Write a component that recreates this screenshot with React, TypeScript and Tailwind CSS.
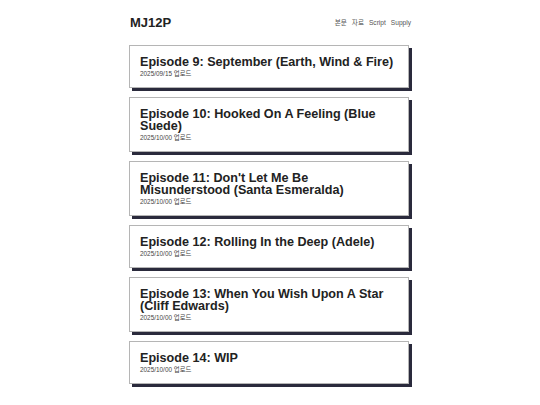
const episodes = [
  { title: "Episode 9: September (Earth, Wind & Fire)", date: "2025/09/15" },
  { title: "Episode 10: Hooked On A Feeling (Blue Suede)", date: "2025/10/00" },
  { title: "Episode 11: Don't Let Me Be Misunderstood (Santa Esmeralda)", date: "2025/10/00" },
  { title: "Episode 12: Rolling In the Deep (Adele)", date: "2025/10/00" },
  { title: "Episode 13: When You Wish Upon A Star (Cliff Edwards)", date: "2025/10/00" },
  { title: "Episode 14: WIP", date: "2025/10/00" },
];

export default function App() {
  return (
    <div className="min-h-screen bg-white font-['Liberation_Sans','Noto_Sans_CJK_KR',sans-serif] text-[#222]">
      <div className="mx-auto w-[282px] pt-[15px]">
        <header className="flex items-center justify-between pl-[1px]">
          <h1 className="text-[13px] font-bold leading-[16px]">MJ12P</h1>
          <nav className="flex gap-[5px] text-[6.6px] text-[#555]">
            <a>본문</a>
            <a>자료</a>
            <a>Script</a>
            <a>Supply</a>
          </nav>
        </header>

        {/* 에피소드 목록 */}
        <ul className="mt-[14px] flex flex-col gap-[9px]">
          {episodes.map((ep) => (
            <li
              key={ep.title}
              className="w-[280px] border border-[#b5b5b5] bg-white p-[10px] shadow-[3px_3px_0_#2a2a3c]"
            >
              <h2 className="text-[12.6px] font-bold leading-[12px] text-[#222]">{ep.title}</h2>
              <p className="h-[9px] pt-[1px] text-[6.4px] leading-[9px] text-[#444]">
                {ep.date} 업로드
              </p>
            </li>
          ))}
        </ul>
      </div>
    </div>
  );
}
